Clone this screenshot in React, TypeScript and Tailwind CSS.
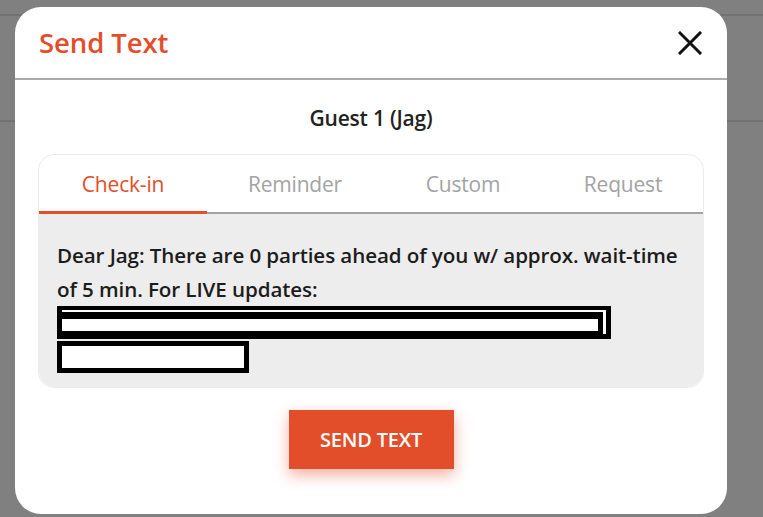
import React, { useState } from "react";

const tabs = ["Check-in", "Reminder", "Custom", "Request"];

function CloseIcon() {
    return (
        <svg width="24" height="24" viewBox="0 0 24 24" fill="none">
            <path d="M2 2 L22 22 M22 2 L2 22" stroke="#111" strokeWidth="3" strokeLinecap="square" />
        </svg>
    );
}

export default function App() {
    const [active, setActive] = useState(0);

    return (
        <div
            className="relative h-[517px] w-[763px] overflow-hidden bg-[#808080]"
            style={{ fontFamily: "'Open Sans', Lato, sans-serif" }}
        >
            {/* page behind the overlay */}
            <div className="mt-[14px] h-[2px] bg-[#727272]" />
            <div className="mt-[104px] h-[2px] bg-[#727272]" />

            <div className="absolute left-[15px] top-[7px] flex h-[507px] w-[712px] flex-col rounded-[26px] bg-white">
                <header className="flex h-[71px] items-center justify-between pl-[24px] pr-[25px] pt-[1px]">
                    <h1 className="text-[27.5px] font-semibold tracking-[-0.1px] text-[#e24e2a]">Send Text</h1>
                    <button className="p-0">
                        <CloseIcon />
                    </button>
                </header>
                <div className="h-[2px] bg-[#ababab]" />

                <div className="mt-[25px] text-center text-[21px] font-semibold leading-[26px] tracking-[-0.2px] text-[#222]">
                    Guest 1 (Jag)
                </div>

                <section className="mx-[23px] mt-[23px] rounded-2xl border border-[#ececec]">
                    <div className="grid grid-cols-[168px_176px_160px_1fr]">
                        {tabs.map((t, i) => (
                            <div
                                key={t}
                                onClick={() => setActive(i)}
                                className={
                                    i === active
                                        ? "flex h-[59px] cursor-pointer items-center justify-center border-b-[3px] border-[#e24e2a] pt-[3px] text-[21px] tracking-[-0.2px] text-[#e24e2a]"
                                        : "flex h-[59px] cursor-pointer items-center justify-center border-b-2 border-[#a3a3a3] pt-[2px] text-[21px] tracking-[-0.2px] text-[#a3a3a3]"
                                }
                            >
                                {t}
                            </div>
                        ))}
                    </div>
                    <div className="rounded-b-2xl bg-[#ededed] px-[18px] pb-[14px] pt-[24px]">
                        <p className="text-[20.6px] font-semibold leading-[34px] tracking-[-0.1px] text-[#1c1c1c]">
                            Dear Jag: There are 0 parties ahead of you w/ approx. wait-time
                            <br />
                            of 5 min. For LIVE updates:
                        </p>
                        {/* redacted link */}
                        <div className="relative h-[33px] w-[554px] bg-black">
                            <div className="absolute left-[5px] top-[4px] h-[2px] w-[544px] bg-white" />
                            <div className="absolute right-[5px] top-[4px] h-[24px] w-[3px] bg-white" />
                            <div className="absolute left-[5px] top-[13px] h-[12px] w-[536px] bg-white" />
                        </div>
                        <div className="mt-[2px] h-[32px] w-[192px] border-[5px] border-black bg-white" />
                    </div>
                </section>

                <div className="mt-[22px] flex justify-center">
                    <button className="h-[59px] w-[165px] bg-[#e24e2a] text-[20px] font-semibold tracking-[-0.2px] text-white shadow-[0_6px_14px_rgba(226,78,42,0.45)]">
                        SEND TEXT
                    </button>
                </div>
            </div>
        </div>
    );
}
